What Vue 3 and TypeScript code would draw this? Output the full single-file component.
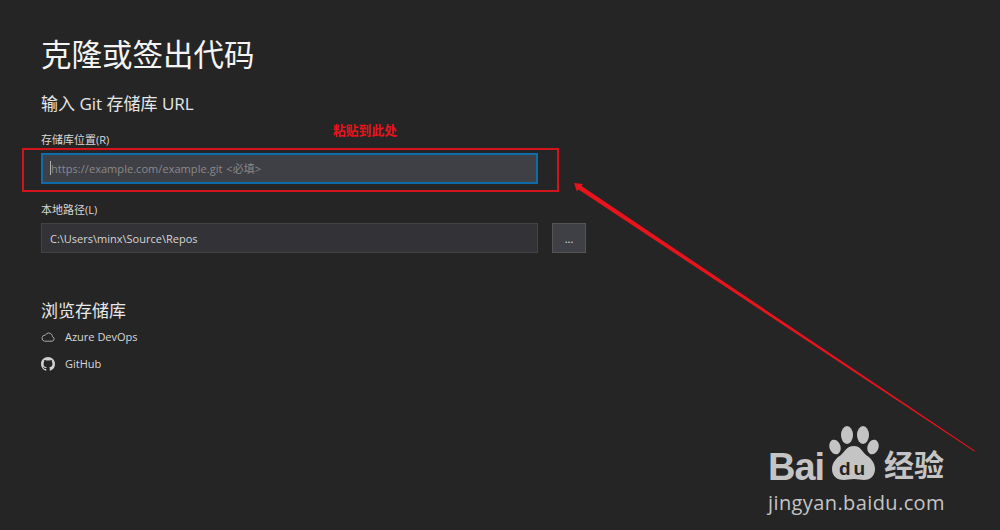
<script setup lang="ts">
const repoUrl = 'https://example.com/example.git <必填>'
const localPath = 'C:\\Users\\minx\\Source\\Repos'
</script>

<template>
  <div class="page">
    <h1 class="title">克隆或签出代码</h1>
    <h2 class="subtitle">输入 Git 存储库 URL</h2>

    <label class="field-label first">存储库位置(R)</label>
    <div class="row">
      <div class="input focused">
        <span class="caret"></span>
        <span class="placeholder">{{ repoUrl }}</span>
      </div>
    </div>

    <label class="field-label second">本地路径(L)</label>
    <div class="row short">
      <div class="input">{{ localPath }}</div>
      <button class="browse">...</button>
    </div>

    <h2 class="browse-title">浏览存储库</h2>
    <ul class="links">
      <li>
        <span class="icon">
          <svg width="14" height="10" viewBox="0 0 14 10" fill="none" stroke="#a8a8a8" stroke-width="1">
            <path d="M3.4 9.2h7.6a2.3 2.3 0 0 0 .4-4.5A3.600 3.600 0 0 0 7.700 1 3.700 3.700 0 0 0 4.400 3.100 3.100 3.100 0 0 0 3.400 9.200z" />
          </svg>
        </span>
        Azure DevOps
      </li>
      <li>
        <span class="icon">
          <svg width="14" height="14" viewBox="0 0 16 16" fill="#d0d0d0">
            <path d="M8 0C3.58 0 0 3.58 0 8c0 3.54 2.29 6.53 5.47 7.59.4.07.55-.17.55-.38 0-.19-.01-.82-.01-1.49-2.01.37-2.53-.49-2.69-.94-.09-.23-.48-.94-.82-1.13-.28-.15-.68-.52-.01-.53.63-.01 1.08.58 1.23.82.72 1.21 1.87.87 2.33.66.07-.52.28-.87.51-1.07-1.78-.2-3.64-.89-3.64-3.95 0-.87.31-1.59.82-2.15-.08-.2-.36-1.02.08-2.12 0 0 .67-.21 2.2.82.64-.18 1.32-.27 2-.27s1.36.09 2 .27c1.53-1.04 2.2-.82 2.2-.82.44 1.1.16 1.92.08 2.12.51.56.82 1.27.82 2.15 0 3.07-1.87 3.75-3.65 3.95.29.25.54.73.54 1.48 0 1.07-.01 1.93-.01 2.2 0 .21.15.46.55.38A8.01 8.01 0 0 0 16 8c0-4.42-3.58-8-8-8z" />
          </svg>
        </span>
        GitHub
      </li>
    </ul>

    <!-- red annotation drawn over the screenshot -->
    <div class="mark-box"></div>
    <div class="mark-text">粘贴到此处</div>
    <svg class="mark-arrow" width="1000" height="530" viewBox="0 0 1000 530">
      <polygon points="574,183 583,184 581.500,186 975,450.800 974.400,451.600 578.500,189.500 577,191.500" fill="#e8141c" />
    </svg>

    <!-- watermark -->
    <div class="watermark">
      <div class="wm-top">
        <span class="wm-bai">Bai</span>
        <svg class="wm-paw" width="52" height="58" viewBox="0 0 52 58" fill="#c4c4c4">
          <ellipse cx="7" cy="23" rx="5.500" ry="7.500" transform="rotate(-18 7 23)" />
          <ellipse cx="19" cy="11" rx="6" ry="9" />
          <ellipse cx="35" cy="11" rx="6" ry="9" />
          <ellipse cx="45" cy="23" rx="5.500" ry="7.500" transform="rotate(18 45 23)" />
          <path d="M26 22c6 0 8 5 12 9 5 3 9 8 9 14 0 8-6 11-11 11-3 0-6-1-10-1s-7 1-10 1c-6 0-12-3-12-11 0-6 4-11 9-14 4-4 6-9 13-9z" />
        </svg>
        <span class="wm-du">du</span>
        <span class="wm-jy">经验</span>
      </div>
      <div class="wm-url">jingyan.baidu.com</div>
    </div>
  </div>
</template>

<style scoped>
.page {
  position: relative;
  width: 1000px;
  height: 530px;
  box-sizing: border-box;
  padding: 35px 0 0 41px;
  background: #252526;
  color: #f1f1f1;
  font-family: 'Open Sans', 'Noto Sans CJK SC', sans-serif;
  overflow: hidden;
}

.title {
  margin: 0;
  font-size: 30.500px;
  line-height: 38px;
  font-weight: 400;
  color: #f4f4f4;
}

.subtitle {
  margin: 19px 0 0;
  font-size: 17px;
  line-height: 24px;
  font-weight: 400;
  color: #e6e6e6;
}

.field-label {
  display: block;
  font-size: 11px;
  line-height: 16px;
  color: #d8d8d8;
}

.field-label.first {
  margin-top: 16px;
  margin-bottom: 5px;
}

.field-label.second {
  margin-top: 18px;
  margin-bottom: 5px;
}

.row {
  display: flex;
  gap: 14px;
  height: 31px;
}

.row.short {
  height: 30px;
}

.input {
  display: flex;
  align-items: center;
  width: 497px;
  box-sizing: border-box;
  padding-left: 8px;
  background: #333337;
  border: 1px solid #434346;
  font-size: 11px;
  color: #d6d6d6;
}

.input.focused {
  padding-left: 7px;
  padding-bottom: 1px;
  background: #3f3f46;
  border: 2px solid #0e6cab;
}

.caret {
  width: 1px;
  height: 14px;
  background: #b0b0b0;
}

.placeholder {
  letter-spacing: 0.05px;
  word-spacing: 1px;
  color: #8a8a8a;
}

.browse {
  width: 34px;
  padding: 0;
  background: #3f3f46;
  border: 1px solid #555558;
  font-family: inherit;
  font-size: 11px;
  color: #e0e0e0;
}

.browse-title {
  margin: 47px 0 0;
  font-size: 17px;
  line-height: 22px;
  font-weight: 400;
  color: #e8e8e8;
}

.links {
  margin: 1px 0 0;
  padding: 0;
  list-style: none;
  font-size: 11px;
  color: #d8d8d8;
}

.links li {
  display: flex;
  align-items: center;
  height: 27px;
}

.icon {
  display: flex;
  justify-content: center;
  width: 14px;
  margin-right: 10px;
}

.mark-box {
  position: absolute;
  left: 22px;
  top: 148px;
  width: 533px;
  height: 40px;
  border: 2px solid #d4141c;
}

.mark-text {
  position: absolute;
  left: 333px;
  top: 122px;
  font-size: 12.800px;
  line-height: 16px;
  font-weight: 700;
  color: #e8141c;
}

.mark-arrow {
  position: absolute;
  left: 0;
  top: 0;
}

.watermark {
  position: absolute;
  left: 768px;
  top: 424px;
  color: #c4c4c4;
}

.wm-top {
  position: relative;
  display: flex;
  align-items: flex-end;
  box-sizing: border-box;
  height: 66px;
  padding-bottom: 3px;
}

.wm-bai {
  font-family: 'Liberation Sans', sans-serif;
  font-size: 38px;
  line-height: 40px;
  font-weight: 700;
  letter-spacing: -1px;
}

.wm-paw {
  position: absolute;
  left: 60px;
  top: 0;
}

.wm-du {
  position: absolute;
  left: 71px;
  top: 31px;
  font-family: 'Liberation Sans', sans-serif;
  font-size: 19px;
  line-height: 28px;
  font-weight: 700;
  letter-spacing: 3px;
  color: #252526;
}

.wm-jy {
  position: absolute;
  left: 116px;
  top: 22px;
  font-size: 30px;
  line-height: 38px;
  font-weight: 700;
  white-space: nowrap;
}

.wm-url {
  font-family: 'Open Sans', sans-serif;
  font-size: 20px;
  line-height: 26px;
  letter-spacing: 0.4px;
  white-space: nowrap;
}
</style>

<style>
body {
  background: #252526;
}
</style>
